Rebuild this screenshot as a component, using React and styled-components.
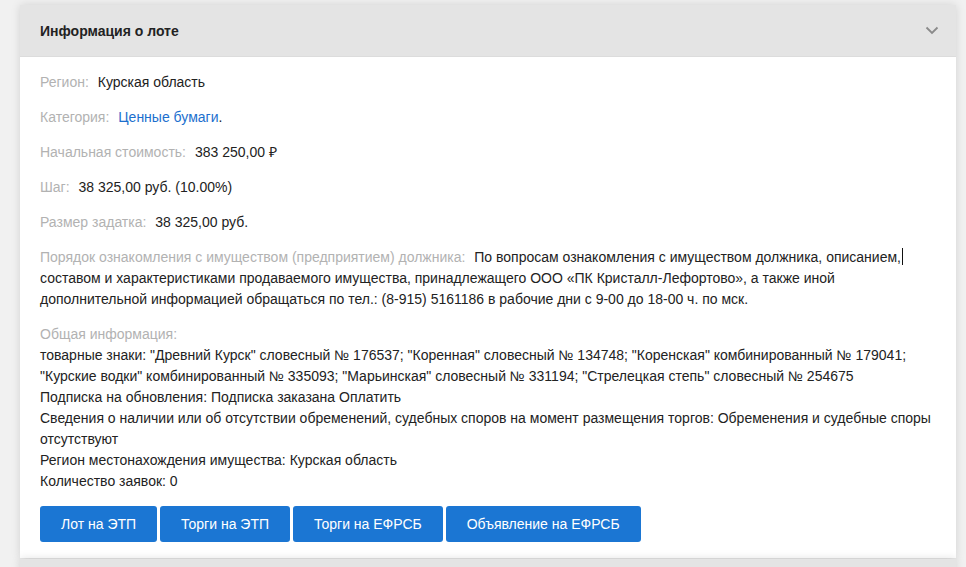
import styled, { createGlobalStyle } from 'styled-components'

const GlobalStyle = createGlobalStyle`
    html, body {
        margin: 0;
        padding: 0;
        background: #f1f1f1;
        font-family: "Liberation Sans", Arial, sans-serif;
        font-size: 14px;
        color: #222;
    }
`

const Page = styled.div`
    padding: 5px 10px 0 20px;
    height: 567px;
    overflow: hidden;
    box-sizing: border-box;
`

const Panel = styled.section`
    background: #fff;
    box-shadow: 0 0 9px rgba(0, 0, 0, 0.13);
    margin-bottom: 1px;
`

Panel.Header = styled.div`
    height: 52px;
    display: flex;
    align-items: center;
    justify-content: space-between;
    padding: 0 17px 0 20px;
    background: #e4e4e4;
    border-bottom: 1px solid #dcdcdc;
    box-sizing: border-box;
    font-weight: bold;
    font-size: 14px;
    color: #222;
`

Panel.Body = styled.div`
    padding: 15px 20px 16px;
    line-height: 21px;
`

const Field = styled.div`
    margin-bottom: 14px;
`

const Label = styled.span`
    color: #b2b2b2;
    margin-right: 5px;
    display: ${({ $block }) => ($block ? 'block' : 'inline')};
`

const Link = styled.a`
    color: #1c6fce;
    text-decoration: none;
`

const Caret = styled.span`
    display: inline-block;
    width: 1px;
    height: 17px;
    background: #111;
    vertical-align: -3px;
    margin-left: 1px;
`

const Buttons = styled.div`
    display: flex;
    gap: 3px;
    margin-top: 14px;
`

const Button = styled.button`
    height: 36px;
    min-width: 117px;
    padding: 0 21px;
    border: none;
    border-radius: 3px;
    background: #1b76d3;
    color: #fff;
    font-family: "Liberation Sans", Arial, sans-serif;
    font-size: 14px;
    cursor: pointer;
`

function Chevron() {
    return (
        <svg width="14" height="9" viewBox="0 0 14 9">
            <path d="M1.5 1.5 L7 7 L12.5 1.5" fill="none" stroke="#8a8a8a" strokeWidth="1.8" />
        </svg>
    )
}

export default function App() {
    return (
        <>
            <GlobalStyle />
            <Page>
                <Panel>
                    <Panel.Header>
                        <span>Информация о лоте</span>
                        <Chevron />
                    </Panel.Header>
                    <Panel.Body>
                        <Field><Label>Регион:</Label> Курская область</Field>
                        <Field><Label>Категория:</Label> <Link href="#">Ценные бумаги</Link>.</Field>
                        <Field><Label>Начальная стоимость:</Label> 383 250,00 ₽</Field>
                        <Field><Label>Шаг:</Label> 38 325,00 руб. (10.00%)</Field>
                        <Field><Label>Размер задатка:</Label> 38 325,00 руб.</Field>
                        <Field>
                            <Label>Порядок ознакомления с имуществом (предприятием) должника:</Label> По вопросам ознакомления с имуществом должника, описанием,<Caret /> составом и характеристиками продаваемого имущества, принадлежащего ООО «ПК Кристалл-Лефортово», а также иной дополнительной информацией обращаться по тел.: (8-915) 5161186 в рабочие дни с 9-00 до 18-00 ч. по мск.
                        </Field>
                        <div>
                            <Label $block>Общая информация:</Label>
                            товарные знаки: "Древний Курск" словесный № 176537; "Коренная" словесный № 134748; "Коренская" комбинированный № 179041; "Курские водки" комбинированный № 335093; "Марьинская" словесный № 331194; "Стрелецкая степь" словесный № 254675<br />
                            Подписка на обновления: Подписка заказана Оплатить<br />
                            Сведения о наличии или об отсутствии обременений, судебных споров на момент размещения торгов: Обременения и судебные споры отсутствуют<br />
                            Регион местонахождения имущества: Курская область<br />
                            Количество заявок: 0
                        </div>
                        <Buttons>
                            <Button>Лот на ЭТП</Button>
                            <Button>Торги на ЭТП</Button>
                            <Button>Торги на ЕФРСБ</Button>
                            <Button>Объявление на ЕФРСБ</Button>
                        </Buttons>
                    </Panel.Body>
                </Panel>
                <Panel>
                    <Panel.Header />
                </Panel>
            </Page>
        </>
    )
}
